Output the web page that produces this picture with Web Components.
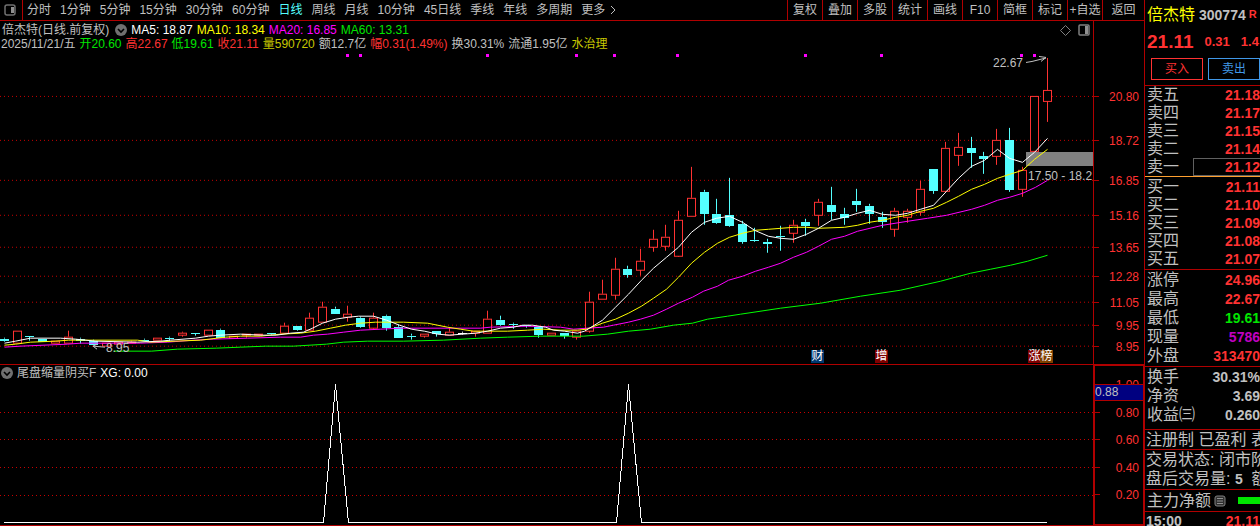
<!DOCTYPE html>
<html lang="zh-CN">
<head>
<meta charset="utf-8">
<title>倍杰特 300774</title>
<style>
  html, body {
    margin: 0;
    height: 100%;
    background: #000;
  }

  body {
    --line: #b00000;
    --up: #ff3232;
    --down: #54ffff;
    --text: #c0c0c0;
    display: flex;
    overflow: hidden;
    color: var(--text);
    font: 12px/14px "Liberation Sans", "Noto Sans CJK SC", sans-serif;
  }

  main {
    flex: 1;
    min-width: 0;
    display: flex;
    flex-direction: column;
  }
</style>
</head>
<body>
<main>
  <period-bar></period-bar>
  <k-chart></k-chart>
  <signal-chart></signal-chart>
</main>
<quote-panel></quote-panel>

<script>
const W = 1093;

// both panes are plotted in one coordinate space, the sub chart starts where the main one ends
const MAIN = { top: 21, height: 343 };
const SUB = { top: 365, height: 160 };

const axisLabels = (list, pane) => list.map(([y, text]) => `
  <span class="tick" style="top:${(y - pane.top) / pane.height * 100}%"></span>
  <span class="label" style="top:${(y - pane.top) / pane.height * 100}%">${text}</span>`).join('');

const gridLines = (list) => list.map((y) =>
  `<path d="M0 ${y}.5H${W}" stroke="#c80000" stroke-dasharray="1 3"/>`).join('');

const place = (x, y, pane) => `left:${x / W * 100}%;top:${(y - pane.top) / pane.height * 100}%`;

const foldIcon = `
  <svg width="12" height="12" viewBox="0 0 12 12">
    <circle cx="6" cy="6" r="6" fill="#707070"/>
    <path d="M3 5l3 3 3-3" fill="none" stroke="#000" stroke-width="1.6"/>
  </svg>`;

const paneStyle = `
  :host { display: flex; min-height: 0; box-sizing: border-box; border-bottom: 1px solid var(--line); }
  .plot { flex: 1; min-width: 0; display: grid; position: relative; overflow: hidden; }
  .plot > .canvas { grid-area: 1 / 1; width: 100%; height: 100%; position: absolute; }
  header { grid-area: 1 / 1; z-index: 1; white-space: nowrap; }
  .row { display: flex; gap: 4px; }
  .axis { width: 51px; box-sizing: border-box; position: relative; border-left: 1px solid var(--line); overflow: hidden; color: var(--up); }
  .tick { position: absolute; left: 0; width: 5px; height: 1px; background: var(--line); }
  .label { position: absolute; right: 5px; margin-top: -6px; }
  button { all: unset; display: flex; cursor: pointer; }
`;

window.customElements.define('period-bar', class extends HTMLElement {
  constructor() {
    super();
    const root = this.attachShadow({ mode: 'open' });

    const periods = ['分时', '1分钟', '5分钟', '15分钟', '30分钟', '60分钟', '日线', '周线', '月线',
      '10分钟', '45日线', '季线', '年线', '多周期'];
    const tools = ['复权', '叠加', '多股', '统计', '画线', 'F10', '简框', '标记', '+自选', '返回'];

    root.innerHTML = `
    <style>
      :host { display: flex; height: 20px; border-bottom: 1px solid var(--line); white-space: nowrap; }
      button { all: unset; cursor: pointer; }
      button.on { color: var(--down); }
      .panel { width: 22px; padding-left: 4px; box-sizing: border-box; display: flex; align-items: center; }
      nav { flex: 1; min-width: 0; display: flex; align-items: center; gap: 9px; padding-left: 4px; border-left: 1px solid var(--line); }
      .more { display: flex; align-items: center; gap: 5px; }
      .tools { display: flex; }
      .tools button { width: 34px; border-left: 1px solid var(--line); text-align: center; line-height: 20px; }
      .tools button:last-child { width: 41px; }
    </style>
    <button class="panel" aria-label="侧栏">
      <svg width="12" height="12" viewBox="0 0 12 12">
        <rect x="1" y="1" width="10" height="10" rx="2" fill="none" stroke="#707070" stroke-width="1.5"/>
        <rect x="7" y="3" width="3" height="6" fill="#909090"/>
      </svg>
    </button>
    <nav>
      ${periods.map((p) => `<button class="${p === '日线' ? 'on' : ''}">${p}</button>`).join('')}
      <button class="more">更多
        <svg width="6" height="10" viewBox="0 0 6 10"><path d="M1 1l4 4-4 4" fill="none" stroke="#c0c0c0"/></svg>
      </button>
    </nav>
    <div class="tools">${tools.map((t) => `<button>${t}</button>`).join('')}</div>
    `;
  }
});

// [up / down / flat, high, body top, body bottom, low]
const candles = [
  ['d', 338, 339, 341, 342], ['u', 331, 331, 343, 343], ['d', 336, 336, 337, 341], ['d', 339, 339, 342, 342],
  ['u', 341, 341, 343, 343], ['u', 331, 337, 343, 343], ['d', 338, 339, 341, 344], ['d', 340, 341, 345, 345],
  ['u', 343, 343, 346, 346], ['u', 342, 342, 344, 344], ['u', 341, 342, 343, 343], ['d', 339, 340, 341, 341],
  ['u', 338, 338, 340, 340], ['d', 337, 338, 339, 341], ['u', 332, 333, 335, 337], ['d', 333, 333, 334, 336],
  ['u', 330, 330, 335, 335], ['d', 329, 330, 338, 338], ['u', 336, 336, 338, 338], ['u', 334, 334, 335, 338],
  ['u', 334, 334, 335, 335], ['d', 333, 333, 334, 335], ['u', 323, 326, 333, 333], ['d', 326, 326, 330, 331],
  ['u', 313, 318, 330, 330], ['u', 302, 307, 322, 322], ['d', 307, 309, 314, 314], ['u', 306, 314, 317, 322],
  ['d', 317, 318, 327, 328], ['u', 313, 318, 328, 329], ['d', 315, 316, 328, 331], ['d', 325, 327, 338, 338],
  ['d', 334, 336, 337, 340], ['u', 334, 334, 336, 338], ['d', 331, 331, 334, 337], ['u', 328, 332, 335, 335],
  ['f', 332, 333, 334, 335], ['u', 331, 331, 333, 337], ['u', 311, 319, 333, 333], ['d', 316, 320, 325, 326],
  ['d', 323, 324, 325, 329], ['d', 325, 325, 326, 328], ['d', 327, 327, 335, 338], ['u', 333, 333, 335, 335],
  ['d', 333, 333, 336, 339], ['u', 331, 331, 337, 340], ['u', 292, 302, 331, 333], ['u', 280, 294, 299, 299],
  ['u', 258, 269, 295, 300], ['d', 266, 269, 275, 278], ['u', 249, 261, 270, 276], ['u', 230, 239, 247, 252],
  ['u', 225, 237, 246, 251], ['u', 211, 220, 256, 257], ['u', 167, 198, 216, 216], ['d', 190, 192, 214, 225],
  ['d', 199, 214, 223, 224], ['d', 178, 215, 226, 227], ['d', 221, 224, 242, 244], ['d', 228, 240, 241, 242],
  ['d', 239, 242, 244, 253], ['d', 226, 236, 237, 251], ['u', 220, 225, 233, 243], ['d', 219, 222, 226, 236],
  ['u', 199, 202, 215, 226], ['d', 187, 205, 212, 220], ['d', 208, 214, 218, 225], ['d', 189, 201, 205, 212],
  ['d', 204, 206, 214, 224], ['d', 212, 217, 222, 228], ['u', 208, 211, 229, 237], ['u', 209, 211, 217, 223],
  ['u', 181, 189, 212, 216], ['d', 169, 169, 191, 194], ['u', 142, 148, 191, 192], ['u', 133, 147, 155, 166],
  ['d', 137, 148, 153, 168], ['d', 152, 156, 159, 174], ['u', 129, 140, 156, 165], ['d', 128, 140, 190, 192],
  ['u', 167, 170, 189, 197], ['u', 96, 96, 151, 151], ['u', 58, 90, 101, 122]
];

const averages = {
  '#00ff00': '113,351 151,351 177,349 216,348 240,347 265,346 293,346 326,344 343,342 367,341 403,341 443,340 480,338 507,337 540,336 583,336 607,334 628,331 650,329 673,325 692,323 707,319 727,316 740,314 780,308 820,303 860,296 900,290 940,281 970,273 990,269 1010,265 1027,261 1047,255',
  '#ff00ff': '4,347 20,346 67,344 80,343 140,343 167,342 193,340 213,339 247,338 280,337 300,337 313,335 327,334 343,332 360,330 380,329 400,328 480,328 490,327 527,326 560,327 573,329 587,328 603,327 613,325 628,322 640,319 653,315 666,309 678,303 692,297 703,291 717,286 728,280 742,276 755,271 768,267 780,263 793,257 806,252 818,246 831,239 844,236 857,231 882,225 907,221 927,218 946,215 971,209 984,205 997,200 1009,197 1022,193 1035,187 1047,180',
  '#ffff00': '4,345 15,344 30,342 55,341 68,340 137,340 150,342 175,341 200,340 225,337 240,336 260,336 280,334 300,333 315,331 330,328 345,325 360,323 375,322 403,322 427,323 447,327 460,329 473,331 507,331 527,330 543,329 560,330 577,330 586,329 602,323 615,319 628,313 641,306 653,298 666,289 678,277 691,263 704,252 717,243 729,237 742,233 755,230 768,229 793,227 806,227 818,228 844,227 857,225 869,222 882,220 895,217 907,215 920,211 933,208 946,202 958,196 971,189 984,184 997,178 1009,174 1022,170 1034,159 1047,149',
  '#ffffff': '4,343 15,341 30,338 60,338 75,339 95,341 137,342 160,341 170,340 195,338 208,336 220,335 240,334 262,335 276,335 290,333 303,332 312,328 322,323 335,319 348,317 358,316 373,316 386,320 399,325 411,329 424,331 437,334 449,335 462,334 475,333 487,331 500,328 513,327 522,325 532,325 545,327 553,330 564,331 577,333 584,331 589,328 602,320 615,307 628,294 641,280 653,268 666,257 678,247 691,232 704,222 716,218 729,216 742,222 754,230 768,236 780,238 793,239 806,234 818,228 831,220 844,217 857,213 869,210 882,214 895,215 907,213 920,209 933,205 946,191 958,178 971,166 984,160 997,149 1009,158 1022,162 1034,152 1047,138'
};

window.customElements.define('k-chart', class extends HTMLElement {
  constructor() {
    super();
    const root = this.attachShadow({ mode: 'open' });

    const prices = [[96, '20.80'], [140, '18.72'], [180, '16.85'], [215, '15.16'], [247, '13.65'],
      [276, '12.28'], [302, '11.05'], [325, '9.95'], [346, '8.95']];
    const signals = [347, 360, 487, 576, 614, 677, 805, 881, 1021, 1034];
    const marks = [[811, '财', '#003870'], [875, '增', '#800000'], [1028, '涨', '#800000'], [1040, '榜', '#804000']];

    const candle = ([kind, high, top, bottom, low], i) => {
      const x = Math.round(4 + i * 12.72);
      const color = { u: '#ff3232', d: '#54ffff', f: '#ffffff' }[kind];
      const wick = `<path d="M${x + 0.5} ${high}V${top}M${x + 0.5} ${bottom}V${low}" stroke="${color}"/>`;
      const body = kind === 'u'
        ? `<rect x="${x - 3.5}" y="${top + 0.5}" width="8" height="${bottom - top}" stroke="${color}"/>`
        : `<rect x="${x - 4}" y="${top}" width="9" height="${bottom - top}" fill="${color}"/>`;
      return wick + body;
    };

    root.innerHTML = `
    <style>
      ${paneStyle}
      :host { flex: 344 1 0; }
      header { padding-top: 2px; }
      .title { display: flex; align-items: center; height: 14px; }
      .title .name { padding: 0 6px 0 2px; }
      .title .row { padding-left: 4px; }
      .title .view { flex: 1; display: flex; justify-content: flex-end; align-items: center; gap: 7px; padding-right: 3px; }
      .values { padding-left: 1px; }
      .up { color: var(--up); }
      .dn { color: #00e600; }
      .vol { color: #c8c800; }
      .note { position: absolute; margin-top: -7px; white-space: nowrap; }
      .mark { position: absolute; width: 13px; height: 13px; line-height: 13px; text-align: center; color: #fff; bottom: 1px; }
    </style>
    <div class="plot">
      <svg class="canvas" viewBox="0 ${MAIN.top} ${W} ${MAIN.height}" preserveAspectRatio="none" shape-rendering="crispEdges" fill="#000">
        ${gridLines(prices.map((p) => p[0]))}
        <rect x="1026" y="152" width="67" height="14" fill="#808080"/>
        ${candles.map(candle).join('')}
        ${Object.entries(averages).map(([color, points]) =>
          `<polyline points="${points}" transform="translate(.5 .5)" fill="none" stroke="${color}"/>`).join('')}
        ${signals.map((x) => `<rect x="${x - 1}" y="54" width="3" height="3" fill="#ff00ff"/>`).join('')}
        <g fill="none" stroke="#c0c0c0">
          <path d="M1026 62.5l6-1 8-2 6-1.500M1039 56.500l7 1-5 4"/>
          <path d="M105 347.500l-12-1M97 344.500l-4 2 4 3"/>
        </g>
      </svg>
      <header>
        <div class="title">
          <span class="name">倍杰特(日线.前复权)</span>
          <button aria-label="指标菜单">${foldIcon}</button>
          <div class="row">
            <span style="color:#fff">MA5: 18.87</span>
            <span style="color:#ff0">MA10: 18.34</span>
            <span style="color:#f0f">MA20: 16.85</span>
            <span style="color:#00e600">MA60: 13.31</span>
          </div>
          <div class="view">
            <svg width="11" height="11" viewBox="0 0 11 11"><path d="M5.500 .5l5 5-5 5-5-5z" fill="none" stroke="#808080"/></svg>
            <svg width="12" height="12" viewBox="0 0 12 12">
              <rect x="1" y="1" width="10" height="10" rx="1" fill="none" stroke="#808080" stroke-width="1.5"/>
              <rect x="7" y="2" width="3" height="8" fill="#909090"/>
            </svg>
          </div>
        </div>
        <div class="row values">
          <span>2025/11/21/五</span>
          <span class="dn">开20.60</span>
          <span class="up">高22.67</span>
          <span class="dn">低19.61</span>
          <span class="up">收21.11</span>
          <span class="vol">量590720</span>
          <span>额12.7亿</span>
          <span class="up">幅0.31(1.49%)</span>
          <span>换30.31%</span>
          <span>流通1.95亿</span>
          <span class="vol">水治理</span>
        </div>
      </header>
      <span class="note" style="${place(993, 63, MAIN)}">22.67</span>
      <span class="note" style="${place(106, 348, MAIN)}">8.95</span>
      <span class="note" style="${place(1028, 176, MAIN)}">17.50 - 18.2</span>
      ${marks.map(([x, text, color]) =>
        `<span class="mark" style="left:${x / W * 100}%;background:${color}">${text}</span>`).join('')}
    </div>
    <div class="axis">${axisLabels(prices, MAIN)}</div>
    `;
  }
});

window.customElements.define('signal-chart', class extends HTMLElement {
  constructor() {
    super();
    const root = this.attachShadow({ mode: 'open' });

    const levels = [[412, '0.80'], [439, '0.60'], [467, '0.40'], [495, '0.20']];

    root.innerHTML = `
    <style>
      ${paneStyle}
      :host { flex: 161 1 0; }
      .row { align-items: center; padding: 1px 0 0 1px; }
      .axis { border: solid var(--line); border-width: 1px 1px 1px 2px; }
      .label { right: 4px; }
      .current { position: absolute; left: 0; right: 0; height: 15px; line-height: 15px; background: #000080;
        border: solid var(--line); border-width: 1px 0; color: var(--text); }
    </style>
    <div class="plot">
      <svg class="canvas" viewBox="0 ${SUB.top} ${W} ${SUB.height}" preserveAspectRatio="none" shape-rendering="crispEdges">
        ${gridLines(levels.map((l) => l[0]))}
        <path d="M4 522.500H323.500L335.500 384.500L348.500 522.500H616.500L628.500 384.500L641.500 522.500H1047" fill="none" stroke="#fff"/>
      </svg>
      <header>
        <div class="row">
          <button aria-label="指标菜单">${foldIcon}</button>
          <span>尾盘缩量阴买F</span>
          <span style="color:#fff">XG: 0.00</span>
        </div>
      </header>
    </div>
    <div class="axis">
      ${axisLabels([[384, '1.00'], ...levels], SUB)}
      <output class="current" style="top:${(384 - SUB.top) / SUB.height * 100}%">0.88</output>
    </div>
    `;
  }
});

window.customElements.define('quote-table', class extends HTMLElement {
  constructor() {
    super();
    this.attachShadow({ mode: 'open' });
  }

  connectedCallback() {
    // rows="label value colour, ..."
    const rows = this.getAttribute('rows').split(',').map((r) => r.trim().split(' '));

    this.shadowRoot.innerHTML = `
    <style>
      :host { display: block; border-bottom: 1px solid var(--line); }
      table { width: 100%; border-collapse: collapse; }
      tr { height: var(--row, 19px); }
      th, td { padding: 0; line-height: 18px; }
      th { padding-left: 2px; font-size: 16px; font-weight: 400; text-align: left; }
      td { width: 67px; font-size: 14px; font-weight: 700; text-align: right; color: var(--up); }
      td.grey { color: var(--text); }
      td.green { color: #00e600; }
      td.purple { color: #c000c0; }
      td.focus { box-shadow: inset 1px 1px #606060, inset 0 -1px #606060; }
    </style>
    <table>${rows.map(([label, value, kind = '']) =>
      `<tr><th scope="row">${label}</th><td class="${kind}">${value}</td></tr>`).join('')}</table>
    `;
  }
});

window.customElements.define('quote-panel', class extends HTMLElement {
  constructor() {
    super();
    const root = this.attachShadow({ mode: 'open' });

    root.innerHTML = `
    <style>
      :host { display: block; width: 115px; border-left: 1px solid var(--line); overflow: hidden; white-space: nowrap; font-size: 16px; }
      .head { height: 85px; border-bottom: 1px solid var(--line); }
      .stock, .price { display: flex; align-items: center; padding-left: 2px; font-weight: 700; }
      .stock { height: 30px; font-size: 14px; gap: 4px; }
      .stock b { color: #ff0; font-size: 16px; font-weight: 400; }
      .stock sup { color: var(--up); font-size: 11px; line-height: 10px; margin: 0 0 2px -1px; vertical-align: 0; }
      .price { height: 24px; font-size: 13px; gap: 11px; color: var(--up); }
      .price strong { font-size: 19px; }
      .trade { display: flex; gap: 5px; padding: 4px 0 0 6px; }
      button { flex: none; width: 52px; height: 22px; padding: 0; background: none; border: 1px solid; color: var(--up);
        font: 12px/20px "Liberation Sans", "Noto Sans CJK SC", sans-serif; cursor: pointer; }
      button.sell { color: #4098e8; }
      .asks { --row: 18px; border-bottom-color: #ffa030; }
      .bids { --row: 18px; padding: 1px 0; }
      .stats { padding-bottom: 1px; }
      .extra { padding: 0 0 5px; }
      p { margin: 0; padding-left: 1px; line-height: 19px; }
      p b, .time { font-size: 14px; }
      .line { border-bottom: 1px solid var(--line); }
      .flow { display: flex; align-items: center; height: 21px; padding-left: 2px; gap: 3px; }
      .flow i { flex: 1; margin-left: 9px; height: 7px; background: #00e600; }
      .time { display: flex; justify-content: space-between; line-height: 19px; font-weight: 700; padding-left: 1px; }
      .time span { color: var(--up); }
    </style>
    <div class="head">
      <div class="stock"><b>倍杰特</b><span>300774</span><sup>R</sup></div>
      <div class="price"><strong>21.11</strong><span>0.31</span><span>1.4</span></div>
      <div class="trade"><button>买入</button><button class="sell">卖出</button></div>
    </div>
    <quote-table class="asks" rows="卖五 21.18, 卖四 21.17, 卖三 21.15, 卖二 21.14, 卖一 21.12 focus"></quote-table>
    <quote-table class="bids" rows="买一 21.11, 买二 21.10, 买三 21.09, 买四 21.08, 买五 21.07"></quote-table>
    <quote-table class="stats" rows="涨停 24.96, 最高 22.67, 最低 19.61 green, 现量 5786 purple, 外盘 313470"></quote-table>
    <quote-table class="extra" rows="换手 30.31% grey, 净资 3.69 grey, 收益㈢ 0.260 grey"></quote-table>
    <p class="line">注册制 已盈利 表</p>
    <p>交易状态: 闭市阶</p>
    <p class="line">盘后交易量: <b>5</b>&nbsp; 额</p>
    <div class="flow line">主力净额
      <svg width="12" height="12" viewBox="0 0 12 12">
        <rect x="1" y="1" width="10" height="10" rx="2" fill="#303030" stroke="#808080"/>
        <path d="M3 3.500h6M3 6h6M3 8.500h6" stroke="#909090"/>
      </svg>
      <i></i>
    </div>
    <div class="time">15:00<span>21.11</span></div>
    `;
  }
});
</script>
</body>
</html>
